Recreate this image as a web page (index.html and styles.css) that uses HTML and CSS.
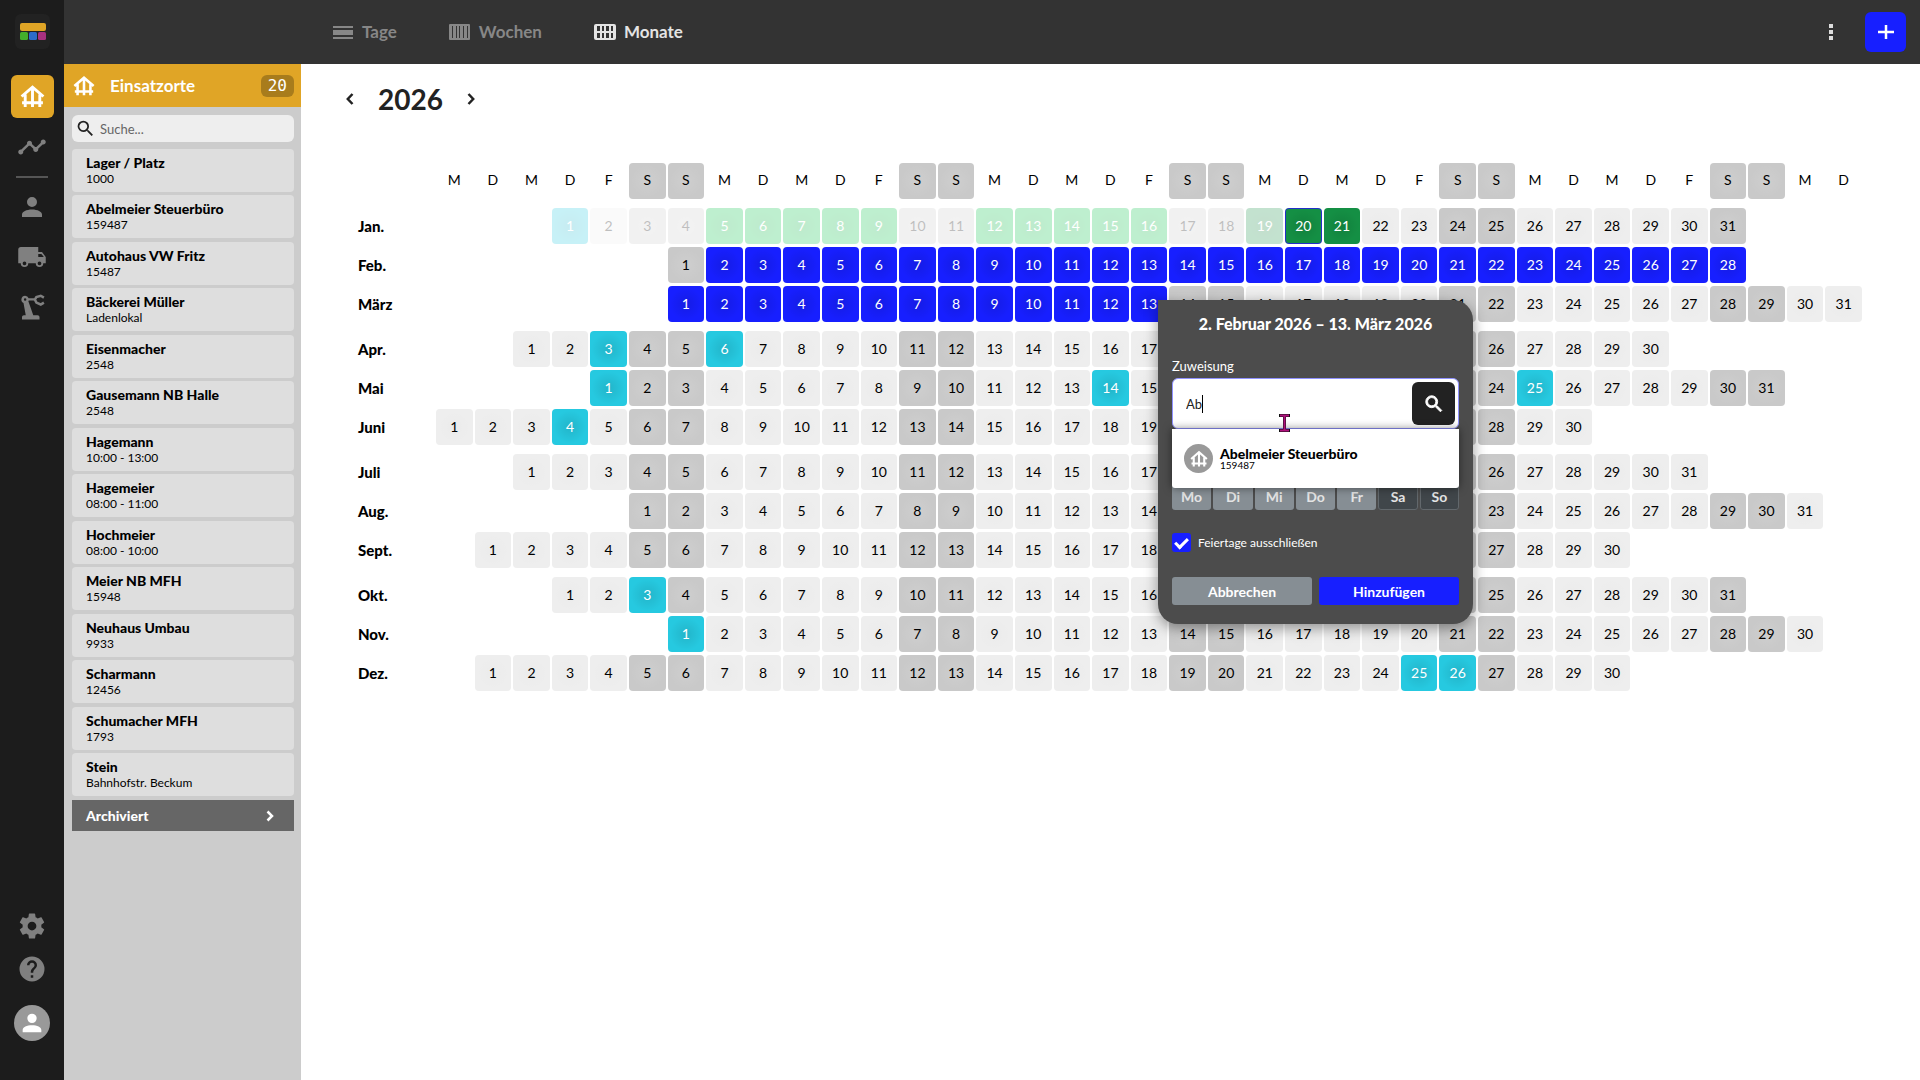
FILE: index.html
```html
<!DOCTYPE html>
<html lang="de">
<head>
<meta charset="utf-8">
<title>Einsatzplanung – Monate 2026</title>
<link rel="stylesheet" href="styles.css">
</head>
<body>
<svg class="defs" aria-hidden="true">
  <symbol id="i-site" viewBox="0 0 24 24"><path fill="none" stroke="currentColor" stroke-width="2.800" d="M1.500 12 12 3l10.500 9M5 10v12M12 4v18M19 10v12M2 18h20" /></symbol>
  <symbol id="i-search" viewBox="0 0 24 24"><path fill="currentColor" d="M9.500 3A6.500 6.500 0 0 1 16 9.500c0 1.610-.59 3.090-1.560 4.230l.27.270h.79l5 5-1.500 1.500-5-5v-.79l-.27-.27A6.516 6.516 0 0 1 9.500 16a6.500 6.500 0 1 1 0-13m0 2C7 5 5 7 5 9.500S7 14 9.500 14 14 12 14 9.500 12 5 9.500 5z"/></symbol>
  <symbol id="i-person" viewBox="0 0 24 24"><path fill="currentColor" d="M12 4a4 4 0 1 1 0 8 4 4 0 0 1 0-8m0 10c4.420 0 8 1.790 8 4v2H4v-2c0-2.210 3.580-4 8-4z"/></symbol>
</svg>
<div class="app">
  <nav class="rail" aria-label="Hauptnavigation">
    <a class="logo" href="#" aria-label="Startseite"><svg viewBox="0 0 35 35"><rect x="5" y="9" width="26" height="8" rx="2" fill="#e0a526"/><rect x="5" y="18" width="8" height="8" rx="1.500" fill="#43ad2b"/><rect x="14" y="18" width="8" height="8" rx="1.500" fill="#2d6cc8"/><rect x="23" y="18" width="8" height="8" rx="1.500" fill="#a8317f"/></svg></a>
    <a class="rail-link active" href="#" aria-label="Einsatzorte"><svg><use href="#i-site"/></svg></a>
    <a class="rail-link trend" href="#" aria-label="Auswertung"><svg viewBox="0 0 24 24"><path fill="currentColor" d="M23 8c0 1.100-.9 2-2 2-.18 0-.35-.02-.51-.07l-3.560 3.550c.05.160.07.340.07.520 0 1.100-.9 2-2 2s-2-.9-2-2c0-.18.020-.36.070-.52l-2.550-2.550c-.16.050-.34.070-.52.070s-.36-.02-.52-.07l-4.550 4.560c.05.160.07.330.07.510 0 1.100-.9 2-2 2s-2-.9-2-2 .9-2 2-2c.18 0 .35.020.51.070l4.560-4.550C8.020 9.360 8 9.180 8 9c0-1.100.9-2 2-2s2 .9 2 2c0 .18-.02.360-.07.520l2.550 2.550c.16-.05.340-.07.520-.07s.36.020.52.070l3.550-3.560C19.020 8.350 19 8.180 19 8c0-1.100.9-2 2-2s2 .9 2 2z"/></svg></a>
    <hr>
    <a class="rail-link" href="#" aria-label="Personal"><svg><use href="#i-person"/></svg></a>
    <a class="rail-link" href="#" aria-label="Fahrzeuge"><svg viewBox="0 0 24 24"><path fill="currentColor" fill-rule="evenodd" d="M20 8h-3V4H3c-1.110 0-2 .89-2 2v11h2a3 3 0 0 0 6 0h6a3 3 0 0 0 6 0h2v-5zM6 18.500a1.500 1.500 0 1 1 0-3 1.500 1.500 0 0 1 0 3m12 0a1.500 1.500 0 1 1 0-3 1.500 1.500 0 0 1 0 3M17 12V9.500h2.500l1.960 2.500z"/></svg></a>
    <a class="rail-link" href="#" aria-label="Geräte"><svg viewBox="0 0 24 24"><path fill="currentColor" fill-rule="evenodd" d="M6.500 3a3 3 0 0 1 2.800 2H14v1.800H9.400l-.3.600L13 18.500h3.500c.8 0 1.500.700 1.500 1.500v2H4v-2c0-.8.700-1.500 1.500-1.500H7L5.200 8.700A3 3 0 0 1 6.500 3m0 2a1 1 0 1 0 0 2 1 1 0 0 0 0-2"/><path fill="none" stroke="currentColor" stroke-width="2" d="M21.500 4.500 19 3l-3.500 1-1.200 2 1.200 2.500L19 10l2.500-1.500"/></svg></a>
    <div class="rail-bottom">
      <a class="rail-link" href="#" aria-label="Einstellungen"><svg viewBox="0 0 24 24"><path fill="currentColor" d="M12 15.500A3.500 3.500 0 1 1 12 8.500a3.500 3.500 0 0 1 0 7m7.430-2.530c.04-.32.070-.64.070-.97s-.03-.66-.07-1l2.110-1.630c.19-.15.240-.42.120-.64l-2-3.460c-.12-.22-.39-.31-.61-.22l-2.490 1c-.52-.39-1.060-.73-1.690-.98l-.37-2.650A.506.506 0 0 0 14 2h-4c-.25 0-.46.180-.5.420l-.37 2.650c-.63.250-1.170.59-1.690.98l-2.490-1c-.22-.09-.49 0-.61.220l-2 3.460c-.13.220-.07.490.12.640L4.570 11c-.04.340-.07.670-.07 1s.03.650.07.970l-2.110 1.660c-.19.150-.25.420-.12.640l2 3.460c.12.220.39.300.61.220l2.490-1.010c.52.400 1.060.74 1.690.99l.37 2.650c.04.240.25.420.5.420h4c.25 0 .46-.18.500-.42l.37-2.650c.63-.26 1.170-.59 1.690-.99l2.490 1.010c.22.080.49 0 .61-.22l2-3.460c.12-.22.070-.49-.12-.64z"/></svg></a>
      <a class="rail-link" href="#" aria-label="Hilfe"><svg viewBox="0 0 24 24"><path fill="currentColor" d="M15.070 11.250l-.9.920C13.450 12.890 13 13.500 13 15h-2v-.5c0-1.110.45-2.110 1.170-2.830l1.240-1.260c.37-.36.590-.86.590-1.410a2 2 0 1 0-4 0H8a4 4 0 1 1 8 0c0 .88-.36 1.670-.93 2.250M13 19h-2v-2h2M12 2a10 10 0 1 0 0 20 10 10 0 0 0 0-20z"/></svg></a>
      <a class="avatar" href="#" aria-label="Profil"><svg><use href="#i-person"/></svg></a>
    </div>
  </nav>

  <div class="shell">
    <header class="topbar">
      <div class="tabs">
        <a href="#"><svg viewBox="0 0 22 16"><path fill="currentColor" d="M1 2h20v2H1zM1 6h20v5H1zM1 13h20v2H1z"/></svg>Tage</a>
        <a href="#"><svg viewBox="0 0 22 16"><rect width="21" height="16" rx="1" fill="currentColor"/><path stroke="#333" d="M3.500 2v12M7.500 2v12M10.500 2v12M14.500 2v12M18.500 2v12"/></svg>Wochen</a>
        <a class="active" href="#" aria-current="page"><svg viewBox="0 0 22 16"><rect width="22" height="16" rx="2" fill="currentColor"/><path fill="#333" d="M3 2h3v5H3zM8 2h2v5H8zM12 2h3v5h-3zM17 2h2v5h-2zM3 9h3v5H3zM8 9h2v5H8zM12 9h3v5h-3zM17 9h2v5h-2z"/></svg>Monate</a>
      </div>
      <div class="top-actions">
        <button class="more" type="button" aria-label="Mehr"><svg viewBox="0 0 6 18"><path fill="currentColor" d="M1 1h4v4H1zM1 7h4v4H1zM1 13h4v4H1z"/></svg></button>
        <button class="add" type="button" aria-label="Hinzufügen"><svg viewBox="0 0 16 16"><path stroke="currentColor" stroke-width="2.500" d="M8 1v14M0 8h16"/></svg></button>
      </div>
    </header>

    <div class="body">
      <aside class="panel">
        <div class="panel-head"><svg><use href="#i-site"/></svg><h2>Einsatzorte</h2><span class="count">20</span></div>
        <label class="search"><svg><use href="#i-search"/></svg><input type="search" placeholder="Suche..." aria-label="Einsatzorte suchen"></label>
        <ul class="sites">
          <li><b>Lager / Platz</b><span>1000</span></li>
          <li><b>Abelmeier Steuerbüro</b><span>159487</span></li>
          <li><b>Autohaus VW Fritz</b><span>15487</span></li>
          <li><b>Bäckerei Müller</b><span>Ladenlokal</span></li>
          <li><b>Eisenmacher</b><span>2548</span></li>
          <li><b>Gausemann NB Halle</b><span>2548</span></li>
          <li><b>Hagemann</b><span>10:00 - 13:00</span></li>
          <li><b>Hagemeier</b><span>08:00 - 11:00</span></li>
          <li><b>Hochmeier</b><span>08:00 - 10:00</span></li>
          <li><b>Meier NB MFH</b><span>15948</span></li>
          <li><b>Neuhaus Umbau</b><span>9933</span></li>
          <li><b>Scharmann</b><span>12456</span></li>
          <li><b>Schumacher MFH</b><span>1793</span></li>
          <li><b>Stein</b><span>Bahnhofstr. Beckum</span></li>
        </ul>
        <button class="archive" type="button">Archiviert<svg viewBox="0 0 8 12"><path fill="none" stroke="currentColor" stroke-width="2.500" d="M1.500 1.500 6 6l-4.500 4.500"/></svg></button>
      </aside>

      <main class="main">
        <div class="year">
          <button type="button" aria-label="Vorheriges Jahr"><svg viewBox="0 0 8 12"><path fill="none" stroke="currentColor" stroke-width="2.500" d="M6.500 1 1.800 6l4.700 5"/></svg></button>
          <h1>2026</h1>
          <button type="button" aria-label="Nächstes Jahr"><svg viewBox="0 0 8 12"><path fill="none" stroke="currentColor" stroke-width="2.500" d="M1.500 1 6.200 6l-4.700 5"/></svg></button>
        </div>
        <div class="calendar">
          <table id="cal" class="cal"></table>
          <form class="popup" aria-label="Zuweisung hinzufügen">
            <h2>2. Februar 2026 – 13. März 2026</h2>
            <label class="field-label" for="assign">Zuweisung</label>
            <div class="combo">
              <input id="assign" type="text" value="Ab" autocomplete="off">
              <button type="button" aria-label="Suchen"><svg><use href="#i-search"/></svg></button>
              <i class="caret"></i>
              <ul class="options">
                <li><span class="option-icon"><svg><use href="#i-site"/></svg></span><span><b>Abelmeier Steuerbüro</b><small>159487</small></span></li>
              </ul>
              <svg class="pointer" viewBox="0 0 11 18"><path fill="none" stroke="#111" stroke-width="3" d="M0 1.500h11M0 16.500h11M5.500 1v16"/><path fill="none" stroke="#b0107c" stroke-width="2" d="M1 1.500h9M1 16.500h9M5.500 1v16"/></svg>
            </div>
            <div class="weekdays">
              <button type="button">Mo</button><button type="button">Di</button><button type="button">Mi</button><button type="button">Do</button><button type="button">Fr</button><button type="button" class="off">Sa</button><button type="button" class="off">So</button>
            </div>
            <label class="check"><input type="checkbox" checked>Feiertage ausschließen</label>
            <div class="actions"><button type="button">Abbrechen</button><button type="button" class="primary">Hinzufügen</button></div>
          </form>
        </div>
      </main>
    </div>
  </div>
</div>
<script src="calendar.js"></script>
</body>
</html>
```
FILE: styles.css
```css
* { box-sizing: border-box; }
body { margin: 0; font-family: Lato, "Liberation Sans", sans-serif; font-size: 14px; color: #000; background: #fff; }
button, input { font: inherit; color: inherit; }
button { border: 0; padding: 0; background: none; cursor: pointer; }
h1, h2, ul { margin: 0; padding: 0; }
ul { list-style: none; }
a { color: inherit; text-decoration: none; }
svg { display: block; flex: none; }
.defs { display: none; }

.app { display: flex; min-height: 100vh; }
.shell { flex: 1; min-width: 0; display: flex; flex-direction: column; }
.body { flex: 1; display: flex; }

/* Icon rail */
.rail { width: 64px; flex: none; display: flex; flex-direction: column; align-items: center; padding: 14px 0 39px; background: #1c1c1c; color: #808080; }
.logo { width: 35px; height: 35px; margin-bottom: 26px; border-radius: 6px; background: #222; }
.rail-link { width: 43px; height: 43px; margin-bottom: 7px; display: grid; place-items: center; border-radius: 6px; }
.rail-link svg { width: 30px; height: 30px; }
.rail-link.active { background: #e0a526; color: #fff; }
.rail-link.active svg { width: 25px; height: 25px; }
.rail-link.trend { margin-bottom: 8px; }
.rail hr { width: 32px; height: 2px; margin: 0 0 7px; border: 0; background: #555; }
.rail-bottom { margin-top: auto; display: flex; flex-direction: column; align-items: center; }
.rail-bottom .rail-link { margin-bottom: 0; }
.avatar { width: 36px; height: 36px; margin-top: 15px; display: grid; place-items: center; border-radius: 50%; background: #999; color: #fff; }
.avatar svg { width: 28px; height: 28px; }

/* Top bar */
.topbar { height: 64px; display: flex; align-items: center; justify-content: space-between; padding: 0 14px 0 268px; background: #333; }
.tabs { display: flex; gap: 52px; font-size: 17px; line-height: 20px; font-weight: 700; color: #878787; }
.tabs a { display: flex; align-items: center; gap: 8px; }
.tabs svg { width: 22px; height: 16px; }
.tabs .active { color: #e4e4e4; }
.top-actions { display: flex; align-items: center; gap: 31px; }
.more svg { width: 6px; height: 18px; }
.more { color: #ddd; }
.add { width: 41px; height: 40px; display: grid; place-items: center; border-radius: 6px; background: #171fff; color: #fff; }
.add svg { width: 16px; height: 16px; }

/* Site list */
.panel { width: 237px; flex: none; background: #ccc; }
.panel-head { height: 43px; display: flex; align-items: center; padding: 0 7px 0 9px; background: #e0a526; color: #fff; }
.panel-head svg { width: 22px; height: 22px; }
.panel-head h2 { flex: 1; margin-left: 15px; font-size: 17px; line-height: 20px; }
.count { padding: 0 7px; border-radius: 6px; background: #a87c1c; font: 400 16px/22px "DejaVu Sans Mono", monospace; }
.search { height: 27px; margin: 8px 7px 7px 8px; padding-left: 3px; display: flex; align-items: center; gap: 4px; border-radius: 6px; background: #eee; color: #222; }
.search svg { width: 21px; height: 21px; }
.search input { flex: 1; min-width: 0; padding: 0; border: 0; background: none; outline: 0; font-size: 13px; }
.search input::placeholder { color: #666; }
.sites { margin: 0 7px 0 8px; }
.sites li { height: 43px; margin-bottom: 4px; padding: 6px 14px; border-radius: 4px; background: #dedede; }
.sites li:nth-child(odd) { margin-bottom: 3px; }
.sites b, .sites span { display: block; }
.sites b { font-size: 14px; line-height: 16px; font-weight: 900; }
.sites span { font-size: 12px; line-height: 16px; }
.archive { width: 222px; height: 31px; margin-left: 8px; padding: 0 20px 0 14px; display: flex; align-items: center; justify-content: space-between; background: #666; color: #fff; font-weight: 900; }
.archive svg { width: 8px; height: 12px; }

/* Year view */
.main { flex: 1; min-width: 0; padding: 15px 56px 40px 45px; }
.year { height: 40px; display: flex; align-items: center; gap: 24px; color: #222; }
.year h1 { font-size: 28px; line-height: 40px; }
.year svg { width: 8px; height: 12px; }
.calendar { position: relative; margin: 41px 0 0 10px; }
.cal { width: 100%; table-layout: fixed; border-spacing: 2px 3px; font-size: 14px; }
.cal tbody::before { content: ""; display: block; height: 3px; }
.cal th, .cal td { height: 36px; padding: 0 0 1px; border-radius: 4px; text-align: center; font-weight: 400; }
.cal thead th { padding-bottom: 3px; }
.cal .month { width: 76px; text-align: left; font-size: 15px; font-weight: 900; }
.cal .day { background: radial-gradient(rgba(0, 0, 0, 0.01), transparent 65%) #eee; }
.cal .weekend { background: radial-gradient(rgba(255, 255, 255, 0.1), transparent 65%) #c9c9c9; }
.cal .holiday, .cal .busy, .cal .done, .cal .selected { color: #fff; background-image: radial-gradient(rgba(0, 0, 0, 0.1), transparent 65%); }
.cal .holiday { background-color: #26c9e0; }
.cal .busy { background-color: #00c343; }
.cal .done { background-color: #148f44; }
.cal .selected { background-color: #171fff; }
.cal .past { opacity: 0.25; }
.cal .today { box-shadow: inset 0 0 0 1px #2330c8; }

/* Assignment popup */
.popup { position: absolute; left: 802px; top: 140px; width: 315px; padding: 13px 14px 19px; border-radius: 0 20px 20px 20px; background: #4c4c4c; color: #fff; box-shadow: 0 4px 14px rgba(0, 0, 0, 0.4); }
.popup h2 { font-size: 16px; line-height: 22px; font-weight: 900; text-align: center; white-space: nowrap; }
.field-label { display: block; margin: 21px 0 2px; font-size: 13px; line-height: 20px; }
.combo { position: relative; height: 51px; padding: 3px; display: flex; border: 1px solid #8f91ff; border-radius: 6px; background: #fff; color: #222; }
.combo input { flex: 1; min-width: 0; padding: 0 0 0 10px; border: 0; background: none; outline: 0; font-size: 13px; }
.combo button { width: 43px; height: 43px; display: grid; place-items: center; border-radius: 6px; background: #222; color: #fff; }
.combo button svg { width: 22px; height: 22px; stroke: currentColor; }
.caret { position: absolute; left: 29px; top: 16px; width: 1px; height: 18px; background: #000; }
.options { position: absolute; left: -1px; right: -1px; top: 50px; border-radius: 0 0 3px 3px; background: #fff; color: #000; box-shadow: 0 0 8px rgba(0, 0, 0, 0.5); }
.options li { height: 59px; display: flex; align-items: center; gap: 7px; padding-left: 12px; }
.options b, .options small { display: block; }
.options b { line-height: 14px; font-weight: 900; }
.options small { font-size: 10px; line-height: 9px; }
.option-icon { width: 29px; height: 29px; display: grid; place-items: center; border-radius: 50%; background: #999; color: #fff; }
.option-icon svg { width: 18px; height: 18px; }
.pointer { position: absolute; left: 106px; top: 35px; width: 11px; height: 18px; }
.weekdays { display: grid; grid-template-columns: repeat(7, 1fr); gap: 2px; margin-top: 55px; }
.weekdays button { height: 26px; padding-bottom: 2px; border-radius: 3px; background: #868e94; color: #e4e4e4; font-weight: 700; font-size: 14px; }
.weekdays .off { background: #40464a; border: 1px solid #62686c; }
.check { display: flex; align-items: center; gap: 7px; margin-top: 23px; font-size: 12px; line-height: 19px; }
.check input { appearance: none; width: 19px; height: 19px; margin: 0; display: grid; place-items: center; border-radius: 3px; background: #171fff; }
.check input:checked::after { content: ""; width: 10px; height: 5px; border: solid #fff; border-width: 0 0 3px 3px; rotate: -45deg; translate: 0 -1px; }
.actions { display: grid; grid-template-columns: 1fr 1fr; gap: 7px; margin-top: 25px; }
.actions button { height: 28px; border-radius: 3px; background: #868e94; font-weight: 700; font-size: 14px; }
.actions .primary { background: #171fff; }
```
FILE: calendar.js
```js
// offset: weekday column of the first day (0 = Monday)
const months = [
  { name: 'Jan.', offset: 3, days: 31, holiday: [1], busy: [5, 6, 7, 8, 9, 12, 13, 14, 15, 16], done: [19, 20, 21] },
  { name: 'Feb.', offset: 6, days: 28, selected: [2, 28] },
  { name: 'März', offset: 6, days: 31, selected: [1, 13] },
  { name: 'Apr.', offset: 2, days: 30, holiday: [3, 6] },
  { name: 'Mai', offset: 4, days: 31, holiday: [1, 14, 25] },
  { name: 'Juni', offset: 0, days: 30, holiday: [4] },
  { name: 'Juli', offset: 2, days: 31 },
  { name: 'Aug.', offset: 5, days: 31 },
  { name: 'Sept.', offset: 1, days: 30 },
  { name: 'Okt.', offset: 3, days: 31, holiday: [3] },
  { name: 'Nov.', offset: 6, days: 30, holiday: [1] },
  { name: 'Dez.', offset: 1, days: 30, holiday: [25, 26] }
];
const columns = 37;
const isWeekend = (col) => col % 7 > 4;

function dayClass(month, index, day, col) {
  const classes = ['day'];
  if (isWeekend(col)) classes.push('weekend');
  for (const kind of ['holiday', 'busy', 'done']) {
    if ((month[kind] || []).includes(day)) classes.push(kind);
  }
  if (month.selected && day >= month.selected[0] && day <= month.selected[1]) classes.push('selected');
  if (index === 0 && day < 20) classes.push('past');
  if (index === 0 && day === 20) classes.push('today');
  return classes.join(' ');
}

let html = '<thead><tr><td class="month"></td>';
for (let col = 0; col < columns; col++) {
  html += `<th scope="col"${isWeekend(col) ? ' class="weekend"' : ''}>${'MDMDFSS'[col % 7]}</th>`;
}
html += '</tr></thead>';
months.forEach((month, index) => {
  if (index % 3 === 0) html += '<tbody>';
  html += `<tr><th scope="row" class="month">${month.name}</th>`;
  for (let col = 0; col < columns; col++) {
    const day = col - month.offset + 1;
    html += day < 1 || day > month.days ? '<td></td>' : `<td class="${dayClass(month, index, day, col)}">${day}</td>`;
  }
  html += '</tr>';
  if (index % 3 === 2) html += '</tbody>';
});
document.getElementById('cal').innerHTML = html;
```
